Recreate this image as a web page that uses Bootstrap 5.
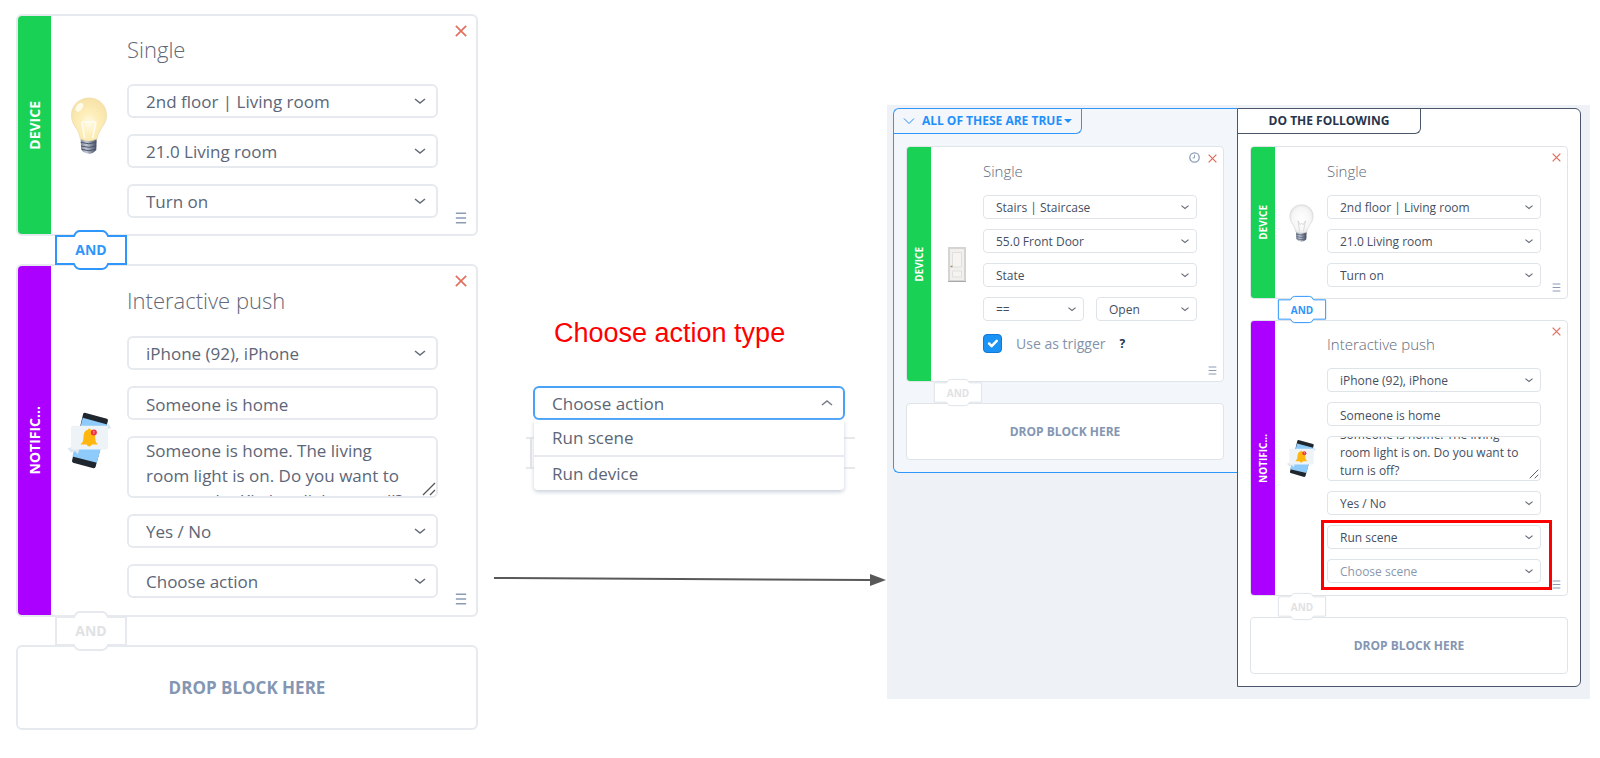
<!DOCTYPE html>
<html lang="en">
<head>
<meta charset="utf-8">
<meta name="viewport" content="width=device-width, initial-scale=1">
<title>Flow builder: choose action type</title>
<link href="https://cdn.jsdelivr.net/npm/bootstrap@5.3.0/dist/css/bootstrap.min.css" rel="stylesheet">
<style>
body { font-family: "Open Sans", "Noto Sans", sans-serif; background: #fff; color: #5c6678; }
.defs { position: absolute; width: 0; height: 0; }
.stage { display: grid; grid-template-columns: 462fr 409fr 703fr; padding: 14px 10px 14px 16px; }

/* Two block sizes share every rule below through these values */
.size-lg { --fs: 17px; --title: 22px; --tag: 14px; --strong: 17px; --join-fs: 14px; --line: 2px; --edge: #e6eaef; --rad: 6px;
  --stripe: 33px; --pic: 76px; --side: 38px; --fh: 34px; --gap: 16px; --pad: 17px; --chev: 14px; --lh: 25px;
  --jw: 74px; --jh: 42px; --jm: -7px; --jl: 38px; --drop: 85px; --end: 16px; --x: 12px; --xr: 9px; --xt: 9px; --mb: 10px; --title-h: 70px; --grip: 14px; }
.size-sm { --fs: 12px; --title: 15px; --tag: 10px; --strong: 12px; --join-fs: 10px; --line: 1px; --edge: #dfe4e9; --rad: 4px;
  --stripe: 24px; --pic: 52px; --side: 26px; --fh: 24px; --gap: 10px; --pad: 12px; --chev: 10px; --lh: 18px;
  --jw: 50px; --jh: 29px; --jm: -4px; --jl: 27px; --drop: 57px; --end: 11px; --x: 9px; --xr: 6px; --xt: 6px; --mb: 6px; --title-h: 49px; --grip: 10px; }

.block { background: #fff; border: var(--line) solid var(--edge); border-radius: var(--rad); overflow: hidden; box-sizing: border-box; }
.stripe { width: var(--stripe); flex: none; color: #fff; font-size: var(--tag); font-weight: 700; }
.stripe span { writing-mode: vertical-rl; transform: rotate(180deg); line-height: 1; }
.stripe.green { background: #18d155; }
.stripe.violet { background: #ab00ff; }
.pic { width: var(--pic); flex: none; }
.bulb { width: 38px; height: 57px; }
.phone { width: 47px; height: 59px; }
.size-sm .bulb { width: 25px; height: 38px; }
.size-sm .phone { width: 31px; height: 39px; }
.door { width: 18px; height: 35px; }
.fields { padding: 0 var(--side) var(--end) 0; gap: var(--gap); min-width: 0; }
.block-title { font-size: var(--title); font-weight: 300; line-height: 1; margin: 0 0 calc(var(--gap) * -1); height: calc(var(--title-h) - var(--line)); display: flex; align-items: center; padding-bottom: 2px; color: #5f6878; }
.size-sm .block-title { padding-bottom: 0; }
.push-lg { --title-h: 72px; --end: 17px; }
.push-sm { --title-h: 48px; --end: 12px; }
.trigger-block { --end: 28px; }

.box { height: var(--fh); border: var(--line) solid var(--edge); border-radius: var(--rad); font-size: var(--fs); line-height: 1.4; color: #5c6678; background-color: #fff; padding: 2px var(--pad) 0; box-shadow: none; min-height: 0; }
.form-select.box { background: #fff url("data:image/svg+xml,%3Csvg xmlns='http://www.w3.org/2000/svg' viewBox='0 0 14 14'%3E%3Cpath d='M2 5l5 4 5-4' fill='none' stroke='%23666d78' stroke-width='1.6'/%3E%3C/svg%3E") no-repeat right 9px center / var(--chev); padding-right: 30px; }
.size-sm .form-select.box { background-position: right 6px center; padding-right: 20px; }
.size-sm .box { color: #454f62; }
.box.unset, .size-sm .box.unset { color: #8b98ad; }
.area { height: 62px; line-height: var(--lh); padding: 0 var(--pad); resize: none; overflow: hidden; display: block; }
.size-sm .area { height: 45px; }
.grip { width: var(--grip); height: var(--grip); right: 2px; bottom: 2px; }

.tools { top: var(--xt); right: var(--xr); gap: 8px; }
.tool { border: 0; background: none; padding: 0; line-height: 0; }
.tool svg { width: var(--x); height: var(--x); }
.tool.clock svg { width: 11px; height: 11px; margin-top: -1px; }
.tool.menu { right: var(--xr); bottom: var(--mb); }
.del { color: #e2705f; }
.menu, .clock { color: #8b9bb4; }

.joint { width: var(--jw); height: var(--jh); margin: var(--jm) 0 var(--jm) var(--jl); position: relative; z-index: 1; border: 0; background: none; padding: 0; font-size: var(--join-fs); font-weight: 700; line-height: 1; color: #2f96fb; display: block; }
.joint svg { position: absolute; inset: 0; width: 100%; height: 100%; fill: #fff; stroke: #2f96fb; stroke-width: var(--line); }
.joint span { position: relative; }
.joint.idle { color: #dfe2e5; }
.joint.idle svg { stroke: var(--edge); }
.dropzone { height: var(--drop); background: #fff; border: var(--line) solid var(--edge); border-radius: var(--rad); font-size: var(--strong); font-weight: 700; color: #8496b2; }

.middle { padding: 303px 0 0; }
.caption { font: 27px/32px "Liberation Sans", Arial, sans-serif; color: #f00; margin: 0 0 37px 76px; white-space: nowrap; }
.picker { margin: 0 42px 0 55px; }
.picker .form-select.box { border: 2px solid #4aa2f8; background-image: url("data:image/svg+xml,%3Csvg xmlns='http://www.w3.org/2000/svg' viewBox='0 0 14 14'%3E%3Cpath d='M2 9l5-4 5 4' fill='none' stroke='%23777d86' stroke-width='1.6'/%3E%3C/svg%3E"); }
.picker::before { content: ""; position: absolute; left: -7px; right: -10px; top: 51px; height: 32px; border: solid #e6e8ea; border-width: 2px 0; }
.picker::after { content: ""; position: absolute; left: -3px; top: 51px; width: 2px; height: 32px; background: #dfe3e8; }
.choices { position: relative; margin: 0 1px; background: #fff; box-shadow: 0 2px 4px #c9d0da; border-radius: 0 0 4px 4px; }
.choices button { height: 35px; border: 0; background: none; text-align: left; padding: 0 18px; font-size: var(--fs); line-height: 1; color: #5c6678; }
.choices button + button { border-top: 2px solid #e6eaef; }
.arrow { height: 14px; margin: 83px 0 0 16px; }
.arrow svg { height: 14px; }

.canvas { background: #eef2f6; margin-top: 91px; padding: 3px 9px 12px 6px; }
.group { flex: 1 1 0; min-width: 0; padding: 0 12px 12px; border: 1px solid; }
.group.when { border-color: #2f96fb; border-right: 0; border-radius: 6px 0 0 6px; background: #f3f6fa; padding-right: 13px; }
.group.then { border-color: #4b566b; border-radius: 0 6px 6px 0; background: #fff; }
.tab { height: 25px; margin: 0 0 12px -12px; border: solid; border-width: 0 1px 1px 0; border-radius: 0 0 6px 0; background: none; font-size: 12px; font-weight: 700; line-height: 1; padding: 0; }
.tab.cond { width: 188px; color: #1e90fb; border-color: #2f96fb; gap: 7px; }
.tab.acts { width: 183px; color: #27344b; border-color: #4b566b; }
.tri { border: 4px solid transparent; border-top-color: #1e90fb; border-bottom: 0; margin-left: -5px; }
.tick { gap: 14px; padding-top: 3px; font-size: 14px; line-height: 19px; color: #8493ab; }
.tick .form-check-input { width: 19px; height: 19px; margin: 0; border-radius: 4px; background-color: #1b93f5; border-color: #1078d6; flex: none; }
.tick .ask { font-size: 12px; color: #27344b; border: 0; background: none; padding: 0; line-height: 1; font-weight: 700; }
.marked { position: relative; gap: var(--gap); }
.marked::after { content: ""; position: absolute; inset: -5px -11px -7px -6px; border: 3px solid #f00; pointer-events: none; z-index: 2; }
.over { overflow: visible; }
.over .stripe { border-radius: 3px 0 0 3px; }
</style>
</head>
<body>
<svg class="defs" aria-hidden="true">
  <defs>
    <radialGradient id="warm" cx=".5" cy=".6" r=".6"><stop offset="0" stop-color="#fffbe6"/><stop offset=".45" stop-color="#fdeeb9"/><stop offset="1" stop-color="#f7e2a8"/></radialGradient>
    <radialGradient id="cool" cx=".5" cy=".5" r=".6"><stop offset="0" stop-color="#fff"/><stop offset=".65" stop-color="#f6f6f6"/><stop offset="1" stop-color="#dcdcdc"/></radialGradient>
    <linearGradient id="metal"><stop offset="0" stop-color="#7d879a"/><stop offset=".35" stop-color="#c3cad6"/><stop offset="1" stop-color="#434d63"/></linearGradient>
  </defs>
  <symbol id="i-x" viewBox="0 0 14 14"><path d="M1 1l12 12m0-12l-12 12" fill="none" stroke="currentColor" stroke-width="2"/></symbol>
  <symbol id="i-menu" viewBox="0 0 14 14"><path d="M1 1.500h12M1 7h12M1 12.500h12" fill="none" stroke="currentColor" stroke-width="1.800"/></symbol>
  <symbol id="i-clock" viewBox="0 0 14 14"><circle cx="7" cy="7" r="6" fill="none" stroke="currentColor" stroke-width="1.600"/><path d="M7 3.500V7.500H4.500" fill="none" stroke="currentColor" stroke-width="1.200"/></symbol>
  <symbol id="i-join" viewBox="0 0 74 42" preserveAspectRatio="none"><path vector-effect="non-scaling-stroke" d="M2 7H20Q22 2 26 2H48Q52 2 54 7H72V35H54Q52 40 48 40H26Q22 40 20 35H2Z"/></symbol>
  <symbol id="i-grip" viewBox="0 0 14 14"><path d="M1 13L13 1M8 13l5-5" stroke="#555" stroke-width="1.300" fill="none"/></symbol>
  <symbol id="i-base" viewBox="30 46 114 172"><path d="M62 172q25 10 48 0l-1 34q-10 12-22 11q-16 0-24-13z" fill="url(#metal)"/><path d="M62 183q24 8 47 0M63 194q24 8 46 0M65 204q22 8 42 0" stroke="#49536a" stroke-width="3" fill="none"/></symbol>
  <symbol id="i-bulb-on" viewBox="30 46 114 172"><use href="#i-base" x="30" y="46" width="114" height="172"/><path d="M87 49C55 49 34 73 34 101c0 20 9 31 18 45c6 10 7 20 9 27q26 11 50 0c2-9 4-17 10-27c8-13 19-25 19-45C140 73 119 49 87 49z" fill="url(#warm)" stroke="#ecd9a6" stroke-width="2"/><path d="M74 170l-8-46q7-8 13 0q7-7 14 0q8-7 14 0l-9 46" fill="none" stroke="#fffdf2" stroke-width="5"/><ellipse cx="58" cy="77" rx="9" ry="15" transform="rotate(35 58 77)" fill="#fffbea"/></symbol>
  <symbol id="i-bulb-off" viewBox="30 46 114 172"><use href="#i-base" x="30" y="46" width="114" height="172"/><path d="M87 49C55 49 34 73 34 101c0 20 9 31 18 45c6 10 7 20 9 27q26 11 50 0c2-9 4-17 10-27c8-13 19-25 19-45C140 73 119 49 87 49z" fill="url(#cool)" stroke="#d4d4d4" stroke-width="3"/><path d="M78 170l-7-48l10 18l7-8l7 8l10-18l-9 48" fill="none" stroke="#ccc" stroke-width="3"/></symbol>
  <symbol id="i-phone" viewBox="18 32 140 176"><path d="M74 37l66 18q4 2 3 6L106 199q-2 4-6 4L39 186q-4-2-3-6L69 41q1-4 5-4z" fill="#20262d"/><path d="M68 52l73 20L110 186L37 168z" fill="#8ecbfa"/><path d="M142 66l11 17-13 5zM22 144l14-5 22 8-5 14-8-9-12 4z" fill="#dfe7ee"/><rect x="33" y="76" width="110" height="71" rx="6" fill="#eef3f7"/><path d="M62 130q8-5 8-20q0-19 13-22q4-7 9 0q13 4 13 22q0 15 7 20v2H94q-1 6-7 6t-7-6H62z" fill="#ffb70f"/><circle cx="101" cy="96" r="9" fill="#ef3340"/><path d="M101 91v6m0 2v2" stroke="#fff" stroke-width="2"/></symbol>
  <symbol id="i-door" viewBox="0 0 18 35"><path d="M0 0h18v35H0z" fill="#d6d4d3"/><path d="M2 2h14v31H2z" fill="#f1f0ee"/><path d="M4.500 5.500h9V20h-9zM4.500 24h9v6h-9z" fill="#f5f4f3" stroke="#e0dfdd"/><path d="M0 34.500h18" stroke="#aaa8a6"/><path d="M2.500 19.500h2" stroke="#a18c5b" stroke-width="1.500"/></symbol>
</svg>

<main class="stage">
  <section class="size-lg" aria-label="Actions before">
    <article class="block d-flex position-relative">
      <div class="stripe green d-flex align-items-center justify-content-center"><span>DEVICE</span></div>
      <div class="pic d-flex align-items-center justify-content-center"><svg class="bulb"><use href="#i-bulb-on"/></svg></div>
      <div class="fields d-flex flex-column flex-grow-1">
        <h2 class="block-title">Single</h2>
        <select class="form-select box" aria-label="Room"><option>2nd floor | Living room</option></select>
        <select class="form-select box" aria-label="Device"><option>21.0 Living room</option></select>
        <select class="form-select box" aria-label="Command"><option>Turn on</option></select>
      </div>
      <div class="tools d-flex position-absolute"><button class="tool del" aria-label="Remove"><svg><use href="#i-x"/></svg></button></div>
      <button class="tool menu position-absolute" aria-label="Menu"><svg><use href="#i-menu"/></svg></button>
    </article>
    <button class="joint"><svg><use href="#i-join"/></svg><span>AND</span></button>
    <article class="block push-lg d-flex position-relative">
      <div class="stripe violet d-flex align-items-center justify-content-center"><span>NOTIFIC...</span></div>
      <div class="pic d-flex align-items-center justify-content-center"><svg class="phone"><use href="#i-phone"/></svg></div>
      <div class="fields d-flex flex-column flex-grow-1">
        <h2 class="block-title">Interactive push</h2>
        <select class="form-select box" aria-label="Recipient"><option>iPhone (92), iPhone</option></select>
        <input class="form-control box" aria-label="Title" value="Someone is home">
        <div class="position-relative">
          <textarea class="form-control box area" aria-label="Message">Someone is home. The living room light is on. Do you want to turn on the Kitchen light as well?</textarea>
          <svg class="grip position-absolute"><use href="#i-grip"/></svg>
        </div>
        <select class="form-select box" aria-label="Answers"><option>Yes / No</option></select>
        <select class="form-select box" aria-label="Action"><option>Choose action</option></select>
      </div>
      <div class="tools d-flex position-absolute"><button class="tool del" aria-label="Remove"><svg><use href="#i-x"/></svg></button></div>
      <button class="tool menu position-absolute" aria-label="Menu"><svg><use href="#i-menu"/></svg></button>
    </article>
    <button class="joint idle"><svg><use href="#i-join"/></svg><span>AND</span></button>
    <div class="dropzone d-flex align-items-center justify-content-center">DROP BLOCK HERE</div>
  </section>

  <section class="middle size-lg" aria-label="Action type">
    <h1 class="caption">Choose action type</h1>
    <div class="picker position-relative">
      <select class="form-select box" aria-label="Action type"><option>Choose action</option></select>
      <div class="choices d-flex flex-column">
        <button>Run scene</button>
        <button>Run device</button>
      </div>
    </div>
    <div class="arrow d-flex">
      <svg class="flex-grow-1" width="1"><line x1="0" y1="5" x2="100%" y2="7" stroke="#595959" stroke-width="2"/></svg>
      <svg width="17" viewBox="0 0 17 14"><path d="M0 1l16 6L0 13z" fill="#595959"/></svg>
    </div>
  </section>

  <section class="canvas size-sm d-flex align-items-start align-self-start" aria-label="Rule">
    <div class="group when">
      <button class="tab cond d-flex align-items-center justify-content-center">
        <svg width="12" height="8" viewBox="0 0 12 8"><path d="M1 1.500l5 5 5-5" fill="none" stroke="#1e90fb"/></svg>
        <span>ALL OF THESE ARE TRUE</span><i class="tri"></i>
      </button>
      <article class="block trigger-block d-flex position-relative">
        <div class="stripe green d-flex align-items-center justify-content-center"><span>DEVICE</span></div>
        <div class="pic d-flex align-items-center justify-content-center"><svg class="door"><use href="#i-door"/></svg></div>
        <div class="fields d-flex flex-column flex-grow-1">
          <h2 class="block-title">Single</h2>
          <select class="form-select box" aria-label="Room"><option>Stairs | Staircase</option></select>
          <select class="form-select box" aria-label="Device"><option>55.0 Front Door</option></select>
          <select class="form-select box" aria-label="Property"><option>State</option></select>
          <div class="d-flex">
            <select class="form-select box me-2" aria-label="Operator"><option>==</option></select>
            <select class="form-select box ms-1" aria-label="Value"><option>Open</option></select>
          </div>
          <div class="tick d-flex align-items-center">
            <input class="form-check-input" type="checkbox" id="trig" checked>
            <label for="trig">Use as trigger</label>
            <button class="ask" aria-label="Help">?</button>
          </div>
        </div>
        <div class="tools d-flex position-absolute">
          <button class="tool clock" aria-label="Delay"><svg><use href="#i-clock"/></svg></button>
          <button class="tool del" aria-label="Remove"><svg><use href="#i-x"/></svg></button>
        </div>
        <button class="tool menu position-absolute" aria-label="Menu"><svg><use href="#i-menu"/></svg></button>
      </article>
      <button class="joint idle"><svg><use href="#i-join"/></svg><span>AND</span></button>
      <div class="dropzone d-flex align-items-center justify-content-center">DROP BLOCK HERE</div>
    </div>

    <div class="group then">
      <div class="tab acts d-flex align-items-center justify-content-center">DO THE FOLLOWING</div>
      <article class="block d-flex position-relative">
        <div class="stripe green d-flex align-items-center justify-content-center"><span>DEVICE</span></div>
        <div class="pic d-flex align-items-center justify-content-center"><svg class="bulb"><use href="#i-bulb-off"/></svg></div>
        <div class="fields d-flex flex-column flex-grow-1">
          <h2 class="block-title">Single</h2>
          <select class="form-select box" aria-label="Room"><option>2nd floor | Living room</option></select>
          <select class="form-select box" aria-label="Device"><option>21.0 Living room</option></select>
          <select class="form-select box" aria-label="Command"><option>Turn on</option></select>
        </div>
        <div class="tools d-flex position-absolute"><button class="tool del" aria-label="Remove"><svg><use href="#i-x"/></svg></button></div>
        <button class="tool menu position-absolute" aria-label="Menu"><svg><use href="#i-menu"/></svg></button>
      </article>
      <button class="joint"><svg><use href="#i-join"/></svg><span>AND</span></button>
      <article class="block over push-sm d-flex position-relative">
        <div class="stripe violet d-flex align-items-center justify-content-center"><span>NOTIFIC...</span></div>
        <div class="pic d-flex align-items-center justify-content-center"><svg class="phone"><use href="#i-phone"/></svg></div>
        <div class="fields d-flex flex-column flex-grow-1">
          <h2 class="block-title">Interactive push</h2>
          <select class="form-select box" aria-label="Recipient"><option>iPhone (92), iPhone</option></select>
          <input class="form-control box" aria-label="Title" value="Someone is home">
          <div class="position-relative">
            <textarea class="form-control box area" id="note" aria-label="Message">Someone is home. The living room light is on. Do you want to turn is off?</textarea>
            <svg class="grip position-absolute"><use href="#i-grip"/></svg>
          </div>
          <select class="form-select box" aria-label="Answers"><option>Yes / No</option></select>
          <div class="marked d-flex flex-column">
            <select class="form-select box" aria-label="Action"><option>Run scene</option></select>
            <select class="form-select box unset" aria-label="Scene"><option>Choose scene</option></select>
          </div>
        </div>
        <div class="tools d-flex position-absolute"><button class="tool del" aria-label="Remove"><svg><use href="#i-x"/></svg></button></div>
        <button class="tool menu position-absolute" aria-label="Menu"><svg><use href="#i-menu"/></svg></button>
      </article>
      <button class="joint idle"><svg><use href="#i-join"/></svg><span>AND</span></button>
      <div class="dropzone d-flex align-items-center justify-content-center">DROP BLOCK HERE</div>
    </div>
  </section>
</main>
<script src="https://cdn.jsdelivr.net/npm/bootstrap@5.3.0/dist/js/bootstrap.bundle.min.js"></script>
<script>
  // Keep the end of the message in view
  const note = document.getElementById('note');
  note.scrollTop = note.scrollHeight;
</script>
</body>
</html>
